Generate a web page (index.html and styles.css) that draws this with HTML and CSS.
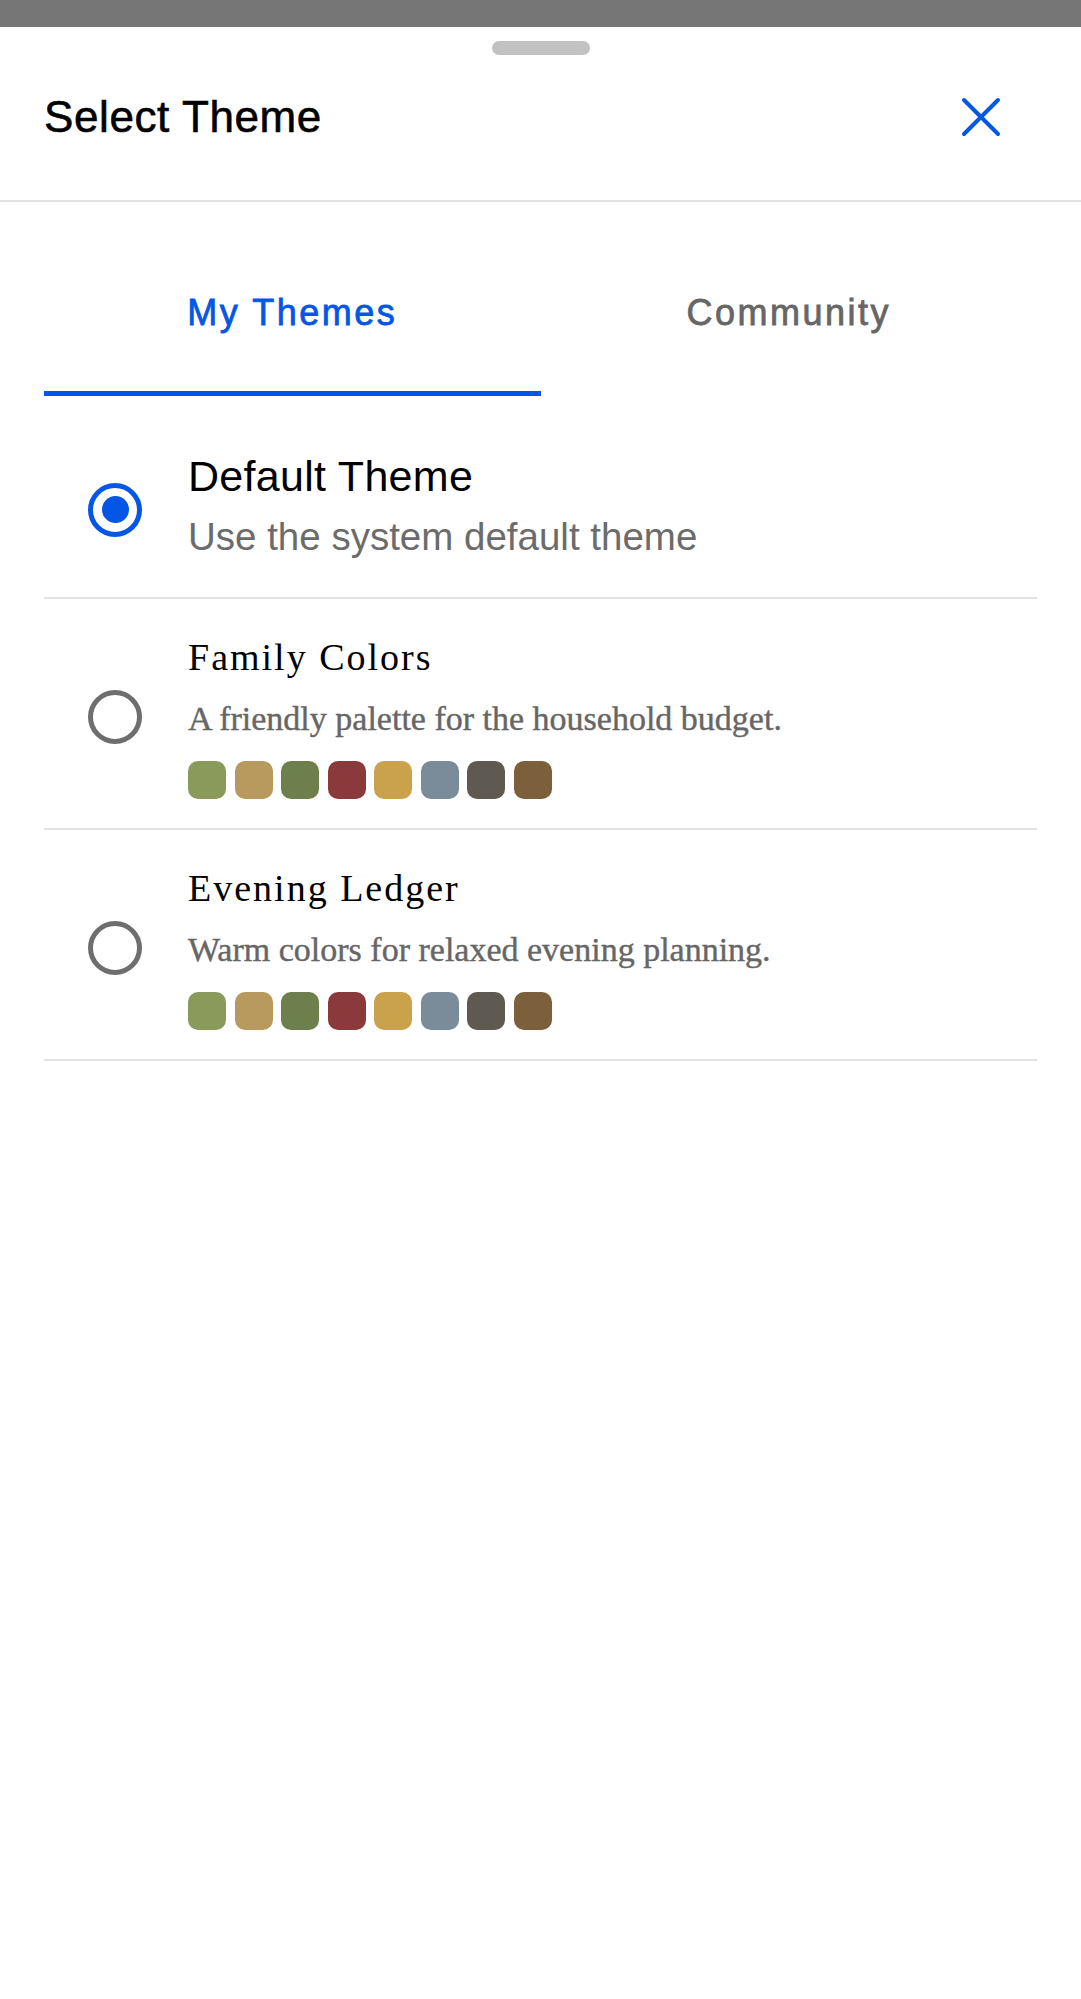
FILE: index.html
```html
<!DOCTYPE html>
<html lang="en">
<head>
    <meta charset="UTF-8">
    <meta name="viewport" content="width=device-width, initial-scale=1.0">
    <title>Select Theme</title>
    <link rel="stylesheet" href="styles.css">
</head>
<body>
    <div class="status-bar"></div>
    <div class="sheet">
        <div class="handle"></div>
        <div class="sheet-header">
            <h2>Select Theme</h2>
            <button class="close-btn" aria-label="Close">
                <svg width="48" height="48" viewBox="0 0 48 48">
                    <path d="M7 7 L41 41 M41 7 L7 41" stroke="#0457e6" stroke-width="4" stroke-linecap="round" fill="none"/>
                </svg>
            </button>
        </div>

        <div class="tabs">
            <button class="tab active">My Themes</button>
            <button class="tab">Community</button>
        </div>

        <div class="theme-list">
            <div class="theme-row plain">
                <span class="radio checked"></span>
                <div class="theme-info">
                    <div class="theme-name">Default Theme</div>
                    <div class="theme-desc">Use the system default theme</div>
                </div>
            </div>

            <div class="theme-row custom">
                <span class="radio"></span>
                <div class="theme-info">
                    <div class="theme-name">Family Colors</div>
                    <div class="theme-desc">A friendly palette for the household budget.</div>
                    <div class="swatches">
                        <span></span><span></span><span></span><span></span>
                        <span></span><span></span><span></span><span></span>
                    </div>
                </div>
            </div>

            <div class="theme-row custom">
                <span class="radio"></span>
                <div class="theme-info">
                    <div class="theme-name">Evening Ledger</div>
                    <div class="theme-desc">Warm colors for relaxed evening planning.</div>
                    <div class="swatches">
                        <span></span><span></span><span></span><span></span>
                        <span></span><span></span><span></span><span></span>
                    </div>
                </div>
            </div>
        </div>
    </div>
</body>
</html>
```

FILE: styles.css
```css
body {
    margin: 0;
    padding: 0;
    font-family: "Liberation Sans", Arial, sans-serif;
    background-color: #fff;
    color: #111;
}
.status-bar {
    height: 27px;
    background-color: #767676;
}
.sheet {
    background-color: #fff;
    min-height: 1972px;
}
.handle {
    width: 98px;
    height: 14px;
    border-radius: 7px;
    background-color: #c2c2c2;
    margin: 14px auto 0;
}
.sheet-header {
    display: flex;
    justify-content: space-between;
    align-items: center;
    padding: 36px 44px 57px;
    border-bottom: 2px solid #e2e2e2;
}
.sheet-header h2 {
    margin: 0;
    font-size: 44px;
    line-height: 52px;
    font-weight: normal;
    letter-spacing: 0.6px;
    -webkit-text-stroke: 0.6px #000;
    color: #000;
}
.close-btn {
    background: none;
    border: none;
    padding: 0;
    margin-right: 32px;
    cursor: pointer;
    display: flex;
}

/* tabs */
.tabs {
    display: grid;
    grid-template-columns: 1fr 1fr;
    margin: 0 44px;
}
.tab {
    background: none;
    border: none;
    border-bottom: 5px solid transparent;
    padding: 89px 0 56px;
    font-family: "Liberation Sans", Arial, sans-serif;
    font-size: 36px;
    line-height: 44px;
    font-weight: normal;
    letter-spacing: 2.5px;
    -webkit-text-stroke: 0.8px currentColor;
    color: #666;
    cursor: pointer;
}
.tab.active {
    color: #0457e6;
    border-bottom-color: #0457e6;
}

/* theme list */
.theme-list {
    margin: 20px 44px 0;
}
.theme-row {
    display: flex;
    align-items: center;
    gap: 46px;
    border-bottom: 2px solid #e2e2e2;
}
.theme-row.plain {
    padding: 35px 0 37px;
}
.theme-row.custom {
    padding: 35px 0 29px;
    font-family: "Liberation Serif", "Times New Roman", serif;
}
.radio {
    flex: none;
    width: 54px;
    height: 54px;
    box-sizing: border-box;
    border: 5px solid #6e6e6e;
    border-radius: 50%;
    margin-left: 44px;
    display: flex;
    align-items: center;
    justify-content: center;
}
.theme-row.plain .radio {
    margin-top: 8px;
}
.radio.checked {
    border-color: #0457e6;
}
.radio.checked::after {
    content: "";
    width: 27px;
    height: 27px;
    border-radius: 50%;
    background-color: #0457e6;
}
.theme-row.plain .theme-name {
    font-size: 43px;
    line-height: 50px;
    letter-spacing: 0.3px;
    color: #000;
}
.theme-row.plain .theme-desc {
    margin-top: 13px;
    font-size: 38.5px;
    line-height: 46px;
    color: #6b6b6b;
}
.theme-row.custom .theme-name {
    font-size: 38px;
    line-height: 46px;
    letter-spacing: 2px;
    color: #000;
}
.theme-row.custom .theme-desc {
    margin-top: 18px;
    font-size: 34px;
    line-height: 42px;
    -webkit-text-stroke: 0.4px currentColor;
    color: #666;
}
.swatches {
    display: flex;
    gap: 8.5px;
    margin-top: 21px;
}
.swatches span {
    width: 38px;
    height: 38px;
    border-radius: 10px;
}
.swatches span:nth-child(1) { background-color: #8a9a5b; }
.swatches span:nth-child(2) { background-color: #b89a5f; }
.swatches span:nth-child(3) { background-color: #6d7f4c; }
.swatches span:nth-child(4) { background-color: #8b3a3b; }
.swatches span:nth-child(5) { background-color: #c9a24b; }
.swatches span:nth-child(6) { background-color: #7a8b99; }
.swatches span:nth-child(7) { background-color: #5e5a52; }
.swatches span:nth-child(8) { background-color: #7c5f3b; }
```
